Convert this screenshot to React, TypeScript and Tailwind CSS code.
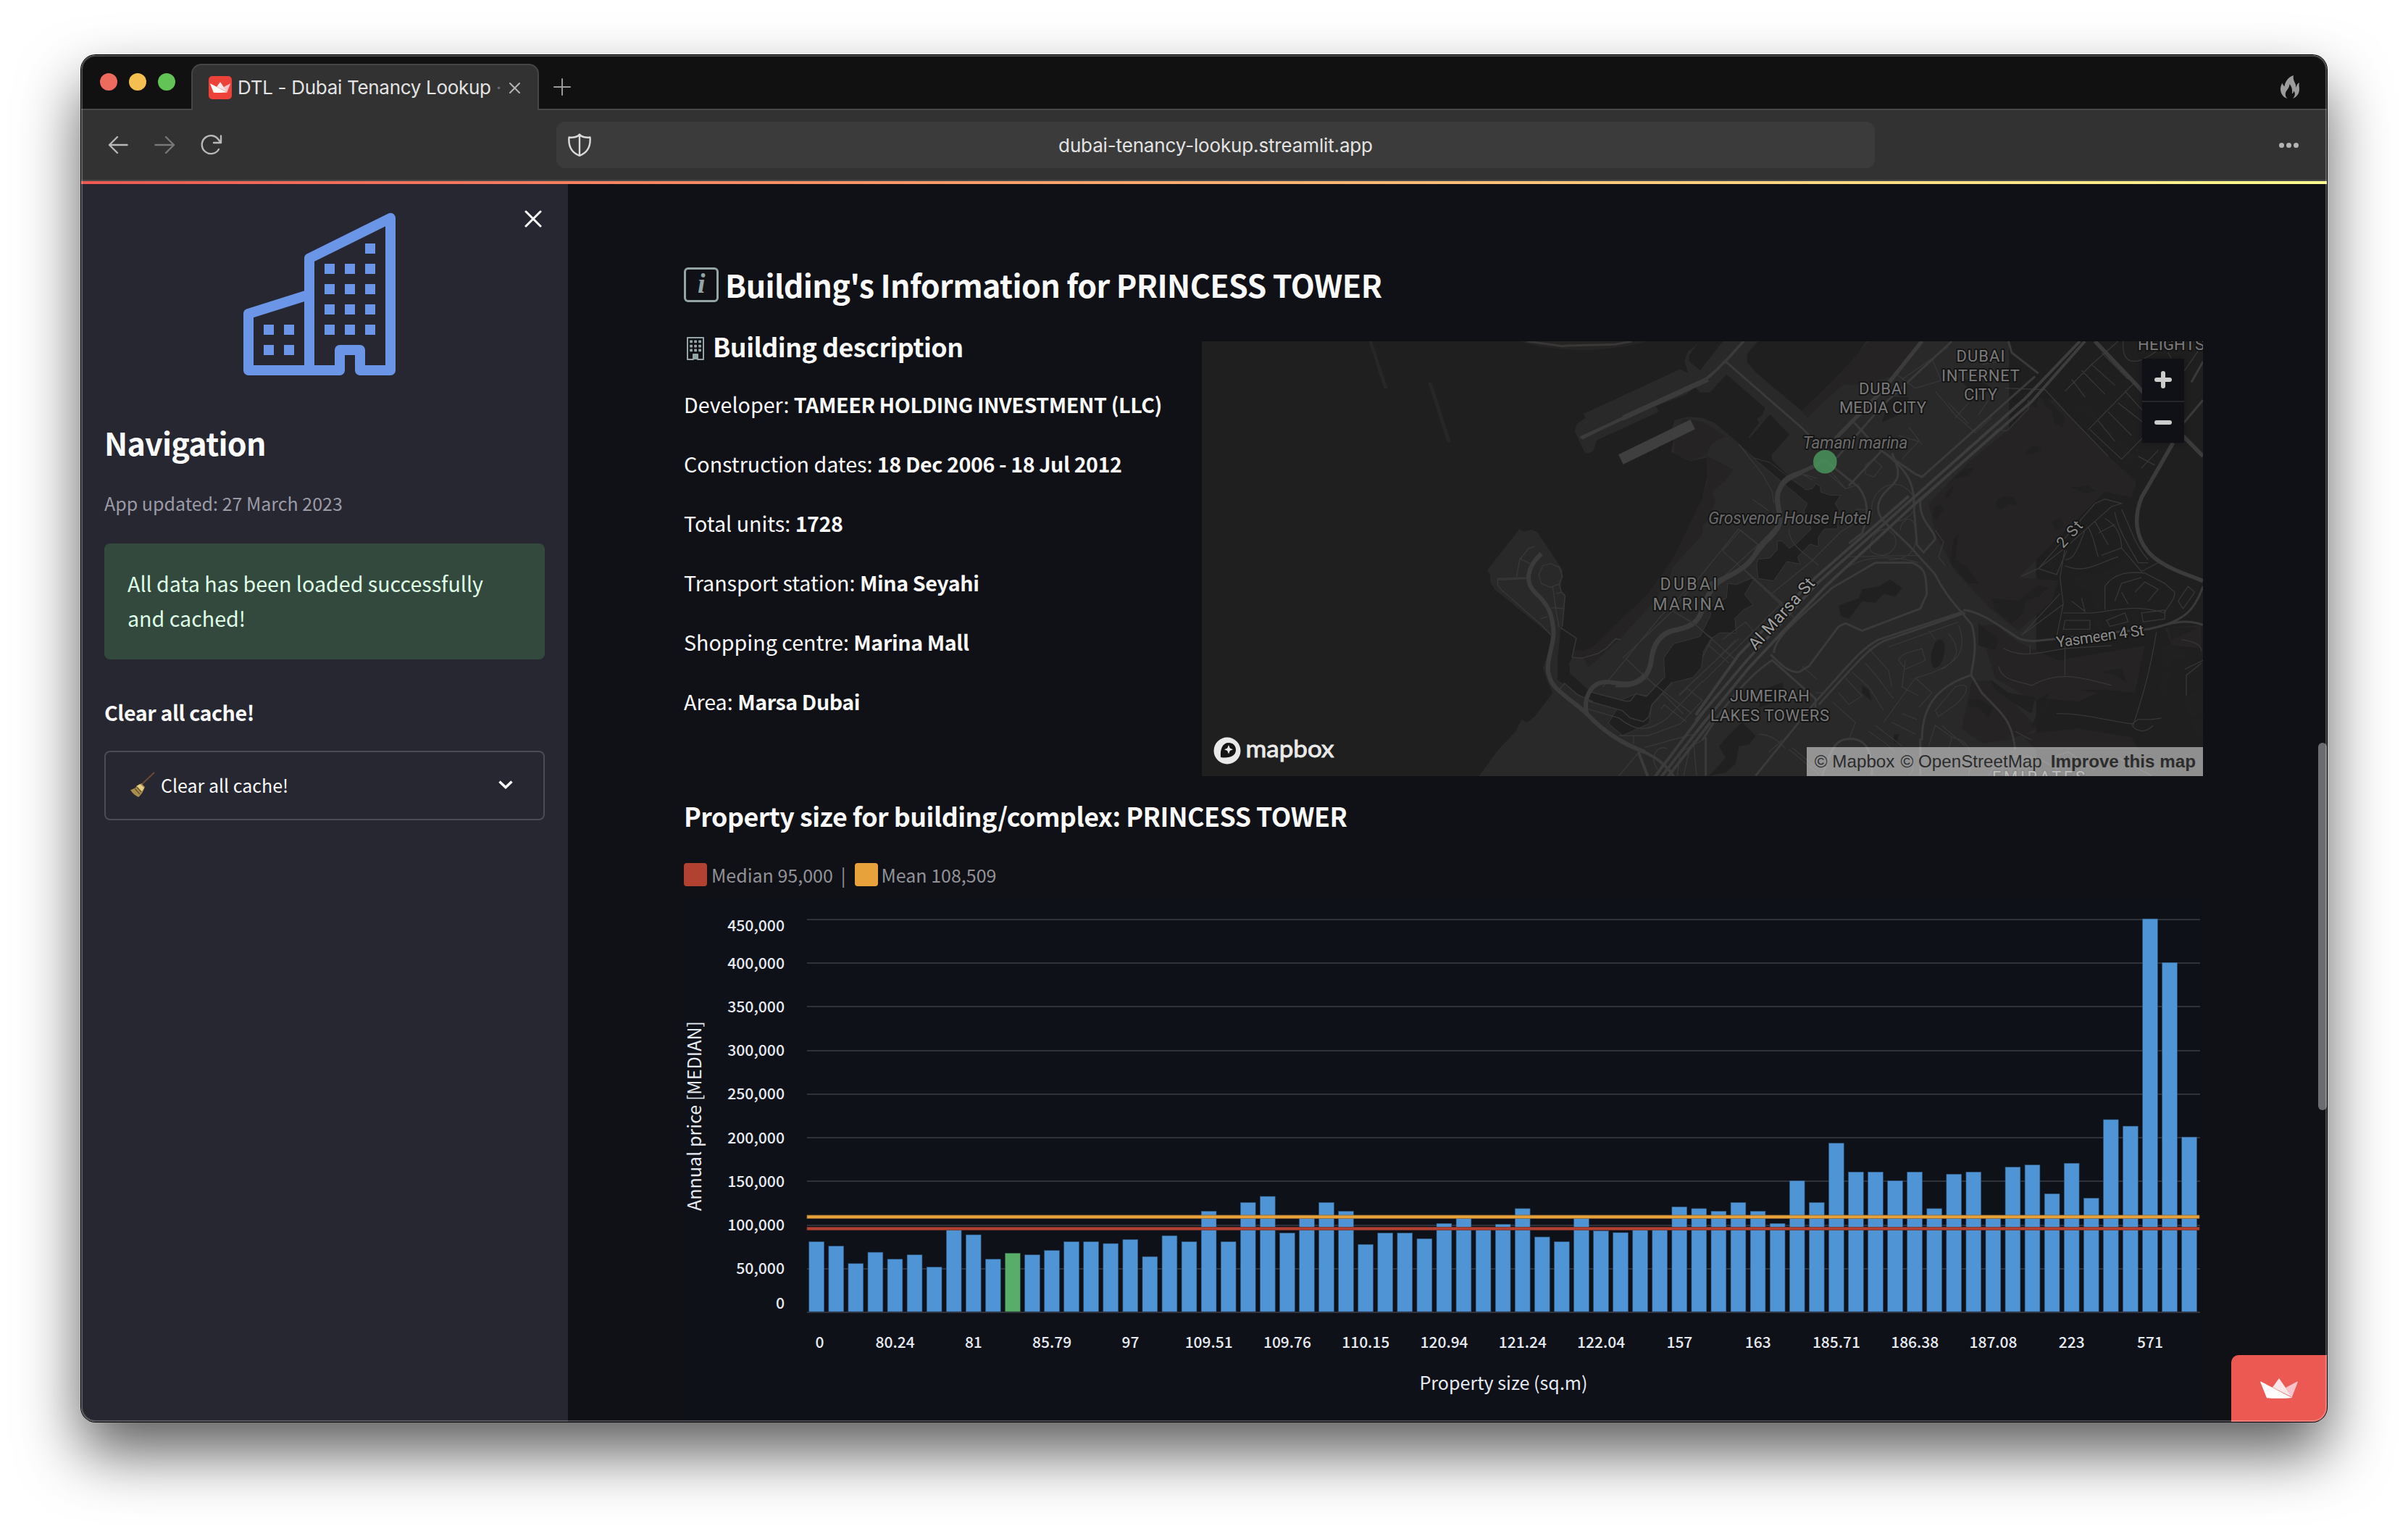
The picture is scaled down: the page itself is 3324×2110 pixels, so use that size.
import React from "react";

const SANS = "font-['Noto_Sans_CJK_SC','Noto_Sans',sans-serif]";

function Crown({ className }: { className: string }) {
  return (
    <svg className={className} viewBox="0 0 52 28">
      <path d="M26 0 L44 26 L17 12.5 Z" fill="#fde6ea" />
      <path d="M51 4.5 Q52 4 51.7 5.5 L43.5 27 L35 13 Z" fill="#f9c3cb" />
      <path d="M0.3 5.5 Q0 4 1.5 4.8 L44 27 Q26 28.6 9 27.2 Z" fill="#fffdfc" />
    </svg>
  );
}

function TabBar() {
  return (
    <div className="flex h-[76px] shrink-0 items-end bg-[#111111]">
      <div className="flex h-full flex-1 items-end">
        <div className="flex h-full w-[152px] items-center gap-4 border-b-2 border-[#484646] pl-[26px]">
          <span className="size-6 rounded-full bg-[#ec6a5e]" />
          <span className="size-6 rounded-full bg-[#f4bf50]" />
          <span className="size-6 rounded-full bg-[#61c454]" />
        </div>
        <div className="flex h-16 w-[480px] items-center rounded-t-[14px] border-x-2 border-t-2 border-[#454545] bg-[#323232] pl-[22px]">
          <span className="flex size-8 items-center justify-center rounded-[5px] bg-[#ee4238]">
            <Crown className="w-7" />
          </span>
          <span className="ml-2 w-[375px] overflow-hidden whitespace-nowrap font-[Inter,sans-serif] text-[26px] leading-8 tracking-[-0.3px] text-[#e3e3e3]">
            DTL - Dubai Tenancy Lookup <span className="text-[#6a6a6a]">·</span>
          </span>
          <svg className="w-[15px]" viewBox="0 0 15 15" stroke="#b4b4b4" strokeWidth="2" strokeLinecap="round">
            <path d="M1 1L14 14M14 1L1 14" />
          </svg>
        </div>
        <div className="flex h-full flex-1 items-center border-b-2 border-[#484646] pl-5">
          <svg className="mt-[14px] w-6" viewBox="0 0 24 24" stroke="#9a9a9a" strokeWidth="2" strokeLinecap="round">
            <path d="M12 1V23M1 12H23" />
          </svg>
          <svg className="mt-[14px] mr-[38px] ml-auto h-8 w-[26px]" viewBox="0 0 26 32" fill="#9c9c9c">
            <path d="M18 0C17 5 19 8 20.5 11.500C21 13 21.300 15 21.300 17C22.300 15 22.500 11.500 26 10C25 13 26 16 26 19C26 25 22.500 30 17 32C20.500 28 20.500 25 18.500 21.500C18 23 17.500 24.500 16 25.500C16.500 21 16 16 12.500 12C12.500 17 8.500 20 7 24C6.300 27 7 30 9.500 32C3 30 0 24.500 0 19C0 16 1 13 2.500 10.500C3 12.500 4 14 5.500 15.500C6 9 11 2 18 0Z" />
          </svg>
        </div>
      </div>
    </div>
  );
}

function Toolbar() {
  return (
    <div className="flex h-[98px] shrink-0 items-center border-b-2 border-[#484848] bg-[#323232] pl-[37px] pr-[39px]">
      <svg className="w-7" viewBox="0 0 28 26" fill="none" stroke="#b8b8b8" strokeWidth="2.4" strokeLinecap="round" strokeLinejoin="round">
        <path d="M13 2L2 13L13 24M2 13H26.500" />
      </svg>
      <svg className="ml-9 w-7" viewBox="0 0 28 26" fill="none" stroke="#787878" strokeWidth="2.400" strokeLinecap="round" strokeLinejoin="round">
        <path d="M16 2L27 13L16 24M27 13H1.500" />
      </svg>
      <svg className="ml-9 w-[30px]" viewBox="0 0 30 30" fill="none" stroke="#b8b8b8" strokeWidth="2.400" strokeLinecap="round" strokeLinejoin="round">
        <path d="M25 21A12.500 12.500 0 1 1 24.500 7.500L27.500 11.500M28 2.500V12H18" />
      </svg>
      <div className="ml-[461px] flex h-16 w-[1820px] items-center rounded-xl bg-[#3b3b3b] pl-4">
        <svg className="w-8" viewBox="0 0 32 32" fill="none" stroke="#dadada" strokeWidth="2.400" strokeLinejoin="round">
          <path d="M16 1.500C18 4.500 24 6.500 30.500 5.500C31.500 17 28.500 26 16 30.800C3.500 26 0.500 17 1.500 5.500C8 6.500 14 4.500 16 1.500ZM16 1.500V30.800" />
        </svg>
        <span className="flex-1 pt-px pr-[48px] text-center font-[Inter,sans-serif] text-[26px] leading-8 tracking-[-0.15px] text-[#e3e3e3]">
          dubai-tenancy-lookup.streamlit.app
        </span>
      </div>
      <div className="ml-auto flex gap-[3px]">
        <span className="size-[7px] rounded-full bg-[#b4b4b4]" />
        <span className="size-[7px] rounded-full bg-[#b4b4b4]" />
        <span className="size-[7px] rounded-full bg-[#b4b4b4]" />
      </div>
    </div>
  );
}

const windowCells: [number, number][] = [
  [168, 42],
  ...[70, 98, 126, 154].flatMap((y) => [112, 140, 168].map((x) => [x, y] as [number, number])),
  [28, 154], [56, 154], [28, 182], [56, 182],
];

function Sidebar() {
  return (
    <aside className="w-[672px] shrink-0 bg-[#262730] px-8">
      <div className="flex items-start pt-10 pl-[192px]">
        <svg className="h-[224px] w-[210px]" viewBox="0 0 210 224" fill="none" stroke="#6b95e6" strokeWidth="14" strokeLinejoin="round">
          <path d="M91 217V62.500L203 7V217H161V189H133V217H7V139L91 112.500" />
          {windowCells.map(([x, y]) => (
            <rect key={x + "-" + y} x={x} y={y} width="14" height="14" fill="#6b95e6" stroke="none" />
          ))}
        </svg>
        <svg className="mt-[-4px] mr-[4px] ml-auto w-6" viewBox="0 0 24 24" stroke="#fafafa" strokeWidth="3" strokeLinecap="round">
          <path d="M2 2L22 22M22 2L2 22" />
        </svg>
      </div>
      <h2 className="mt-[62px] text-[43px] leading-[60px] font-bold tracking-[-0.018em] text-[#fafafa]">Navigation</h2>
      <p className="mt-[34px] text-[25px] leading-10 text-[#9b9ba7]">App updated: 27 March 2023</p>
      <div className="mt-[36px] rounded-lg bg-[#33493d] px-8 pt-[31px] pb-[33px] text-[28.650px] leading-[48px] text-[#dfffe6]">
        All data has been loaded successfully
        <br />
        and cached!
      </div>
      <h3 className="mt-[53px] text-[28.650px] leading-10 font-bold tracking-[-0.015em] text-[#fafafa]">Clear all cache!</h3>
      <button className="mt-[33px] flex h-24 w-full items-center rounded-lg border-2 border-[#4b4c54] pr-[42px] pb-[2px] pl-[34px]">
        <svg className="h-9 w-[34px]" viewBox="0 0 34 36">
          <path d="M15 18L33 1" stroke="#6d4a35" strokeWidth="2" />
          <path d="M15 16L20 21C18 26 16 31 11 35C7 33 3 30 0 25C6 24 10 19 15 16Z" fill="#a88f4e" />
          <path d="M13 17L19 22L16 27L8 20Z" fill="#e6cf83" />
          <path d="M6 23L13 31M9 21L15 28" stroke="#6b5733" strokeWidth="1.500" />
        </svg>
        <span className="ml-2 text-[25px] leading-10 text-[#fafafa]">Clear all cache!</span>
        <svg className="ml-auto w-5" viewBox="0 0 20 12" fill="none" stroke="#fafafa" strokeWidth="3.500">
          <path d="M1.500 1.500L10 9.500L18.500 1.500" />
        </svg>
      </button>
    </aside>
  );
}

const roadsWest = {
  wide: "M1070 770C1030 810 1015 860 1050 900C1090 940 1105 970 1108 1040C1105 1090 1080 1150 1095 1185C1105 1230 1160 1260 1210 1310C1270 1380 1330 1415 1390 1440",
  thin: "M1002 785L1035 803M1050 745L1030 752L1003 790L993 848M935 853L1028 850M935 858L1025 854M935 853V875L945 890L1070 1010L1100 1045M1075 810L1098 803L1125 815L1135 845L1125 872L1098 883L1070 870L1062 840ZM1125 872L1132 900L1143 912L1135 1015M1105 880L1115 960L1125 1018M1100 952L1138 955M1115 905L1132 900M1067 990L1090 982M1130 1020L1178 1055L1165 1120L1195 1123L1245 1107L1272 1088L1300 1057L1315 1060M1125 1230L1142 1208L1180 1245L1230 1270M1222 1237L1330 1268L1345 1268L1362 1243L1395 1252L1448 1190M1215 1268L1320 1300L1345 1325L1385 1337L1402 1322L1412 1280L1475 1203M1260 1220L1332 1125L1380 1060L1440 980L1520 890M1332 1125L1395 1190L1535 1310M1215 1295L1310 1325C1360 1370 1400 1375 1460 1325L1568 1200M1310 1385L1400 1385L1500 1345L1568 1265M1355 1385V1412M1310 1520L1380 1430M1495 1250L1520 1225L1568 1265M1440 1295L1450 1280L1520 1340M1390 1425L1470 1400L1540 1380M1490 1520L1500 1440L1568 1400M1510 1520L1530 1420L1568 1380M1550 1520L1540 1400M1430 1500C1400 1460 1430 1410 1460 1430",
};

const parks = [
  "M1000 240L1060 250L1110 310L1220 440L1270 490L1305 530L1290 580L1210 560L1130 650L950 850L1070 860L1050 930L950 1030L870 960L760 830L700 700L680 600L800 460L910 360Z",
  "M830 1010L880 1010L950 1070L1070 1130L1330 1080L1300 1240L1200 1230L1060 1230L1000 1270L880 1190Z",
  "M810 1200L870 1200L1010 1360L920 1400L840 1410L780 1360Z",
  "M960 1380L1130 1360L1290 1390L1310 1430L1000 1430Z",
  "M1060 1220L1190 1240L1130 1270L1030 1260Z",
  "M1390 1020L1500 1010V1090L1410 1080Z",
];

const ponds = [
  "M1110 845L1200 835L1280 780L1290 805L1220 870L1210 905L1195 960H1180L1165 900L1130 885Z",
  "M410 945L470 920L480 890L530 880L565 857L600 885L580 915L545 905L520 935L480 930L440 990L415 980Z",
  "M700 1070C715 1050 730 1060 728 1090C728 1120 715 1160 695 1155C680 1130 690 1090 700 1070Z",
  "M885 590C900 570 945 570 945 600C930 615 925 585 900 620C885 620 880 605 885 590Z",
  "M970 430L995 405L1020 410L1010 425L985 435Z",
  "M755 515L790 480L815 480L800 505Z",
  "M700 610L715 600L725 620L705 655L692 640Z",
  "M735 560L755 540L745 575L730 580Z",
  "M770 700L760 790L800 820L830 870L800 870L745 800L755 720Z",
  "M870 920L950 930L1010 875L1040 885L1010 915L970 930L965 970L930 1005L880 960Z",
  "M1110 545L1160 540L1185 560L1150 565Z",
  "M1050 660L1080 650L1085 680L1060 690Z",
  "M1150 257L1170 275L1200 330L1270 400L1305 445L1290 475L1270 450L1240 380L1190 340L1160 300L1120 290Z",
  "M1020 240L1040 250L1090 310L1085 340L1060 330L1050 285L1030 270Z",
  "M990 245L1010 240L1005 275L990 270Z",
  "M830 1005L890 1060L880 1095L830 1080Z",
  "M865 1195L920 1240L1000 1255L990 1310L930 1270L880 1230Z",
  "M1200 1170L1260 1155L1275 1205L1240 1180Z",
  "M1015 1290L1040 1260L1040 1290L1010 1330L1020 1360L990 1350Z",
  "M800 1265L830 1260L875 1290L860 1325L830 1290L800 1285Z",
  "M1400 1020L1490 1020L1440 1045L1410 1060Z",
  "M1380 1080L1430 1080L1470 1120L1410 1120L1405 1150H1380Z",
  "M1380 1180L1410 1160L1390 1250L1372 1240Z",
  "M1440 1260L1470 1240L1505 1230V1310L1470 1320Z",
  "M1470 1340L1505 1320V1400L1480 1380Z",
  "M50 1420L90 1370L120 1340L160 1385L140 1415L110 1420L100 1480L70 1510L20 1520L70 1460Z",
  "M180 1230L240 1205L250 1260L170 1290Z",
  "M480 1215L500 1230L510 1270L480 1240Z",
  "M575 1380L590 1380L585 1410H575Z",
  "M1185 985L1200 990V1030L1180 1020Z",
  "M1295 960L1308 960V1000L1290 990Z",
  "M1030 800L1080 760L1060 815L1025 825Z",
  "M1400 940L1420 950L1410 985L1395 975Z",
  "M770 180L840 185L870 210L840 235L810 220Z",
  "M560 240L620 240L610 290L540 325Z",
];

const roadsEast = {
  major:
    "M-20 1335L130 1135L345 870L630 585L970 245L1135 51M-20 1375L140 1155L370 880L640 600L990 255L1150 51M-20 1315L110 1110L340 850L620 575",
  wide: "M660 51L540 220L400 380M235 640C215 560 235 520 270 505C310 490 320 480 370 455M235 640C235 700 170 720 155 780C110 840 60 850 0 885M1180 51L1310 205L1400 320L1505 440M1415 395L1320 580C1285 680 1320 760 1380 800C1420 830 1460 840 1505 862",
  medium:
    "M125 51L70 120L0 188M70 120L300 345L330 380M455 325L530 415L640 500L660 510L1000 170M370 455L470 545C500 590 500 640 480 700L440 735M540 420L440 540M400 450L540 270L750 51M530 415C600 470 640 520 635 600L645 740L665 765L700 720C700 690 650 660 655 590L890 350M570 430C600 500 590 520 560 550C510 600 530 640 545 660L620 740L700 840C730 910 760 940 810 1010C830 1090 810 1150 808 1180L840 1240C900 1310 930 1330 940 1430M215 1105C215 1050 300 980 390 885L520 800H630C680 820 670 860 675 905L655 955L480 1030L430 1005L410 1015L320 1150L290 1170C260 1170 240 1150 205 1110M0 1400C90 1230 180 1150 210 1130L340 1260L340 1290M10 1520V1390M785 965L530 1060C480 1090 460 1120 340 1270L160 1520M790 970L545 1065C500 1090 470 1130 350 1280M785 960C840 965 900 1020 950 1055C990 1080 1060 1050 1340 1025C1400 1010 1440 985 1505 1010M1340 1025C1450 1000 1480 960 1505 880M660 1400C660 1290 700 1220 808 1180M360 1520C390 1420 400 1395 450 1395C500 1400 510 1450 510 1520M655 1395V1520M920 51L930 90L1010 160M1505 250L1415 370M1470 190L1505 120",
  thin: "M470 535L430 550L380 500M490 470L515 450L540 475L515 510L490 500ZM510 640C500 560 560 520 600 540C660 580 650 640 590 660M505 745C510 700 540 680 560 690C600 720 580 770 540 775C510 770 500 760 505 745M595 690C600 640 640 640 640 690C650 760 620 790 560 790M420 830C470 780 560 770 650 800M440 780L650 775M110 400L180 500L210 560L215 600M150 585L200 625L170 600M260 685C260 740 300 760 350 810M60 760L115 690L170 740M60 760L140 840L260 960M130 830L280 990M330 520L300 500L345 515M385 490L430 550M460 620H490M410 700L480 650M600 180L690 110L740 70M690 110L720 190M700 220L760 300L820 360L870 310M760 310L800 260M580 160L640 210L730 180M840 130L890 120M740 260L800 330M860 250L830 300M590 370L650 390L600 450M620 340L660 400M1090 220L1170 130L1250 51M1110 180L1150 240M1140 150L1210 230M1170 130L1240 200M1200 90L1280 180M1160 350L1300 190M1165 350L1260 450L1330 370M1190 320L1240 390M1220 290L1290 370M1250 260L1330 330M1270 220L1360 330M1320 480L1370 420M1310 440L1360 470M1265 51C1260 130 1300 140 1370 80M1400 90L1420 130L1450 150L1505 60M910 210L1030 215L1100 300L1220 440M890 350L915 355L980 280V250M960 845L1010 820L1180 600L1210 585L1260 600L1230 610L1090 750L1010 820L1065 840L1095 760M1090 750L1075 850L1085 940L1065 1050M1085 940L960 1045L1075 905M1150 690C1120 780 1110 790 1090 790M1090 810C1150 840 1190 800 1250 780M1160 680C1180 720 1180 750 1190 780M1180 660L1220 740M1190 700L1240 670M1210 650C1240 670 1260 700 1260 750L1320 830L1370 800M1240 630C1250 690 1280 740 1310 800L1340 800M1260 620C1290 690 1300 740 1340 790M1260 750L1200 775M1085 970L1170 970C1250 960 1300 940 1390 970M1210 960V880C1240 830 1290 830 1330 835L1390 870L1420 900C1420 930 1400 940 1390 970M1240 930L1260 870L1320 850M1300 900L1330 865L1370 890L1340 930M1280 940L1260 900M1110 930L1150 965L1140 920M1090 995H1165V1025H1085ZM1215 995L1270 970L1280 1000L1225 1015ZM1320 970L1390 960V990L1325 1000ZM1430 930L1460 880L1480 900L1445 955ZM500 1090L560 1165L570 1220M560 1085L770 1000M590 1130C600 1100 640 1100 660 1090L670 1130L610 1160ZM680 1030L700 1060M740 1040C770 1080 780 1120 720 1160M770 1010C800 1100 770 1150 640 1190L545 1340M610 1130L600 1220L650 1250M450 1170L500 1220L545 1300M490 1140C540 1200 550 1230 575 1260M430 1190L480 1250L440 1280L410 1240M390 1270L460 1340L440 1400M640 1190L690 1240L650 1290M700 1300L760 1220C800 1200 810 1230 760 1280L710 1320ZM570 1340L640 1380M600 1310L645 1330M500 1370L550 1410L580 1440M520 1350L600 1420M680 1420L700 1350L750 1390L740 1430M720 1350L790 1420M890 1150C900 1200 950 1200 990 1215C1060 1170 1120 1180 1230 1215M905 1090C960 1120 990 1110 1090 1090L1230 1080M1090 1050L1090 1180M985 1080V1110M1065 1310C1150 1310 1200 1330 1290 1345L1310 1330H1350L1380 1325M1290 1345C1300 1370 1330 1380 1355 1350M1295 1350C1320 1260 1340 1200 1365 1035M1440 1060C1500 1070 1500 1090 1500 1100M1455 1250V1180L1500 1140M1450 1160L1505 1130M10 1040L30 1055L0 1120M40 1130L100 1060M20 1080L80 1140M60 1060L130 1000L160 1040M170 1380C200 1380 230 1400 250 1430M260 1430L350 1515M270 1425L360 1510M240 1400L200 1440M340 1240H370M345 1195L300 1150M750 1390C800 1400 820 1440 800 1520M600 1430C640 1470 640 1500 620 1520M860 1520C900 1440 980 1440 1040 1480L1100 1520M940 1370L990 1400M1050 1460L1100 1440L1180 1500M1250 1460L1350 1520M700 690L725 730L710 780L730 810",
};

function MapLabel({ x, y, w, children, size = 22, italic = false, fill = "#7a7a7a" }: {
  x: number; y: number; w: number; children: string; size?: number; italic?: boolean; fill?: string;
}) {
  return (
    <text
      x={x - w / 2} y={y} textLength={w} fontSize={size} fill={fill} fontStyle={italic ? "italic" : "normal"}
      fontFamily="Roboto, sans-serif" stroke="#151515" strokeWidth="4" paintOrder="stroke" strokeLinejoin="round"
    >
      {children}
    </text>
  );
}

function MapPanel() {
  return (
    <div className="relative mt-[18px] h-[600px] w-[1382px] shrink-0 overflow-hidden bg-[#1f1f1f]">
      <svg className="block" width="1382" height="600" viewBox="0 0 1382 600" fill="none">
        <g className="[&_path]:[vector-effect:non-scaling-stroke]">
          <g transform="translate(-9 -21) scale(.44643 .40816)">
            <path d="M536 51H547L595 210L584 213ZM720 192L731 190L790 390L779 394Z" fill="#272727" />
            <path d="M1000 51C1060 70 1110 80 1200 81C1290 80 1350 65 1400 51Z" fill="#272424" />
            <path d="M1025 51L1135 68L1150 66L1300 62L1350 51" stroke="#383838" strokeWidth="3" />
            <path d="M1200 297L1498 146L1568 180L1520 230L1425 270L1433 290L1243 385L1230 422L1218 430H1205L1173 355L1180 330L1207 310Z" fill="#292929" />
            <path d="M1190 377L1375 283L1600 165M1195 381L1260 345L1600 175" stroke="#3b3b3b" strokeWidth="3" />
            <path d="M875 1525L905 1480L935 1435L990 1370L1010 1330L1025 1340L1050 1320L1105 1240L1088 1200L1075 1155L1095 1090L1100 1045L925 890L912 865V840L902 825L1002 687L1015 695L1040 688L1058 697L1136 825L1130 890L1146 910L1135 1020L1130 1080L1120 1130V1195L1200 1250L1222 1237L1158 1175L1155 1140L1165 1120L1230 1085L1290 1020L1400 905L1480 780L1540 665L1568 580H2600V1525Z" fill="#292929" />
            <path d="M1165 1120L1170 1095L1195 1097L1230 1085L1290 1020L1400 905L1480 780L1540 665L1568 580L1600 650L1548 730L1475 815L1470 840L1420 930L1310 1060L1215 1155L1200 1120Z" fill="#262324" />
          </g>
          <g transform="translate(581 -6) scale(.33333)">
            <path d="M330 665L345 600L355 550L345 500L280 515L200 475L210 430L200 390L215 345L270 330L330 335L380 355L480 440L760 690L900 900H330Z" fill="#292929" />
            <path d="M415 18L320 138L275 100V75L310 30L270 60L255 100L285 190L320 230H360L430 155L590 295L575 325L555 340L565 355L520 415L525 420L610 320L690 405L615 490L620 510L700 590L770 640L900 900H1600V0H1020L960 90L880 170L800 290L740 305L555 150L515 105V70L560 18Z" fill="#292929" />
            <path d="M250 340L330 350L425 410L370 440L345 490L280 512L215 480V400ZM345 490L460 550L420 600L370 640L385 680L350 760L200 935L330 665L350 600Z" fill="#262324" />
            <path d="M740 305L880 170L1020 18H1230L1110 165L960 200L915 195L830 270L765 335Z" fill="#262324" />
            <path d="M610 520L700 590L760 633L785 628L800 607L818 618L820 642L860 655L903 655L880 690L895 715L890 795H835L810 830V868L775 858L725 910L735 940L680 930L625 1010L560 1000L555 940L560 920L610 915L640 880V845H660L690 875L720 855L780 795L750 720L765 690L540 500Z" fill="#1f1f1f" stroke="#363636" strokeWidth="1" />
            <path d="M545 1000L505 1065L540 1110L500 1130L465 1165L470 1225H400L365 1250L335 1300L325 1370L290 1410L210 1430L175 1470L120 1525L110 1600L0 1650L-60 1600L0 1500L50 1480L110 1485L175 1425L170 1330L210 1270L320 1240L365 1150L360 1120L430 1080L435 1020L470 1025L530 1000Z" fill="#1f1f1f" stroke="#363636" strokeWidth="1" />
            <path d="M-18 487L280 342L300 382L2 527Z" fill="#3f3f3f" />
            <path d="M0 330L70 298L340 175C370 165 400 120 430 95L500 18M0 342L355 180" stroke="#3b3b3b" strokeWidth="3.500" />
            <path d="M-30 1440H20C80 1430 110 1400 118 1340C125 1280 150 1230 210 1215C300 1200 320 1170 335 1110C360 1050 380 1020 430 995C560 930 530 900 610 830C680 760 640 740 640 660C650 600 690 580 740 560" stroke="#3b3b3b" strokeWidth="7" />
            <path d="M0 1330L200 1140L480 795L560 860L410 1000M200 1130L300 1190L470 1340M235 1480L480 1250M80 1390L250 1560M500 960L660 1100L330 1430M620 1060L780 930L900 810" stroke="#373737" strokeWidth="1.500" />
          </g>
          <g transform="translate(-9 -21) scale(.44643 .40816)">
            <path d="M1130 1025L1178 1055L1165 1120L1155 1140L1158 1175L1222 1237L1330 1268H1345L1362 1243L1395 1252L1448 1190L1500 1180L1475 1203L1412 1280L1402 1322L1385 1337L1345 1325L1320 1300L1215 1268L1120 1195V1130Z" fill="#1f1f1f" />
            <path d={roadsWest.thin} stroke="#373737" strokeWidth="1.500" />
            <path d={roadsWest.wide} stroke="#3b3b3b" strokeWidth="6" />
            <path d="M1210 1310C1200 1260 1220 1205 1270 1203C1340 1210 1350 1220 1390 1180" stroke="#3b3b3b" strokeWidth="6" />
            <path d="M1330 1415C1400 1440 1450 1470 1480 1525M1370 1440L1400 1525M1420 1525L1568 1310M1440 1525L1580 1330M1460 1525L1600 1330" stroke="#3b3b3b" strokeWidth="4" />
          </g>
          <g transform="translate(691 -21) scale(.45918 .40816)">
            {parks.map((d) => <path key={d} d={d} fill="#262324" />)}
            {ponds.map((d) => <path key={d} d={d} fill="#202020" />)}
            <path d={roadsEast.thin} stroke="#373737" strokeWidth="1.300" />
            <path d={roadsEast.medium} stroke="#3a3a3a" strokeWidth="3" />
            <path d={roadsEast.wide} stroke="#3b3b3b" strokeWidth="5.500" />
            <path d={roadsEast.major} stroke="#3d3d3d" strokeWidth="4" />
          </g>
        </g>
        <MapLabel x={940} y={73} w={66}>DUBAI</MapLabel>
        <MapLabel x={940} y={99} w={120}>MEDIA CITY</MapLabel>
        <MapLabel x={1075} y={28} w={67}>DUBAI</MapLabel>
        <MapLabel x={1075} y={55} w={108}>INTERNET</MapLabel>
        <MapLabel x={1075} y={81} w={46}>CITY</MapLabel>
        <MapLabel x={1338} y={12} w={92}>HEIGHTS</MapLabel>
        <MapLabel x={672} y={343} w={79} size={23}>DUBAI</MapLabel>
        <MapLabel x={672} y={371} w={99} size={23}>MARINA</MapLabel>
        <MapLabel x={784} y={497} w={110}>JUMEIRAH</MapLabel>
        <MapLabel x={784} y={524} w={164}>LAKES TOWERS</MapLabel>
        <MapLabel x={1155} y={609} w={128}>EMIRATES</MapLabel>
        <MapLabel x={902} y={148} w={145} size={23} italic fill="#6a6a6a">Tamani marina</MapLabel>
        <MapLabel x={811} y={252} w={224} size={23} italic fill="#6a6a6a">Grosvenor House Hotel</MapLabel>
        <g transform="translate(806 381) rotate(-48)"><MapLabel x={0} y={0} w={124} size={23} fill="#a0a0a0">Al Marsa St</MapLabel></g>
        <g transform="translate(1203 271) rotate(-48)"><MapLabel x={0} y={0} w={42} size={21} fill="#8c8c8c">2 St</MapLabel></g>
        <g transform="translate(1241 414) rotate(-8)"><MapLabel x={0} y={0} w={122} size={21} fill="#8c8c8c">Yasmeen 4 St</MapLabel></g>
        <circle cx="860.300" cy="166.300" r="16.300" fill="#4b9a5e" fillOpacity=".8" />
        <circle cx="35" cy="565" r="18.500" fill="#e9e9e9" />
        <path d="M26 574C25 562 29 554 37 554C43 554 47 558 47 564C47 572 38 576 26 574Z" fill="#151515" />
        <path d="M37 557L38.800 561.500L43 563.300L38.800 565.100L37 569.500L35.200 565.100L31 563.300L35.200 561.500Z" fill="#e9e9e9" />
        <text x="60.500" y="574" textLength="122" fontFamily="Lato, sans-serif" fontWeight="400" fontSize="33" fill="#e9e9e9" stroke="#e9e9e9" strokeWidth=".9" lengthAdjust="spacingAndGlyphs">mapbox</text>
      </svg>
      <div className="absolute top-6 right-[26px] flex w-[58px] flex-col bg-[#101116] shadow-[0_0_8px_rgba(0,0,0,.3)]">
        <span className="flex h-[58px] items-center justify-center">
          <svg className="w-6" viewBox="0 0 24 24" stroke="#cccccc" strokeWidth="6" strokeLinecap="round"><path d="M12 3V21M3 12H21" /></svg>
        </span>
        <span className="flex h-[58px] items-center justify-center border-t-2 border-[#26272b]">
          <svg className="w-6" viewBox="0 0 24 24" stroke="#cccccc" strokeWidth="6" strokeLinecap="round"><path d="M3 12H21" /></svg>
        </span>
      </div>
      <div className="absolute right-0 bottom-0 flex h-10 w-[547px] items-center justify-end bg-white/50 pr-[10px] font-['Liberation_Sans',sans-serif] text-[24.200px] whitespace-nowrap text-[#2c2c2c]">
        <span>© Mapbox</span>
        <span className="ml-2">© OpenStreetMap</span>
        <span className="ml-3 font-bold">Improve this map</span>
      </div>
    </div>
  );
}

const facts: [string, string][] = [
  ["Developer", "TAMEER HOLDING INVESTMENT (LLC)"],
  ["Construction dates", "18 Dec 2006 - 18 Jul 2012"],
  ["Total units", "1728"],
  ["Transport station", "Mina Seyahi"],
  ["Shopping centre", "Marina Mall"],
  ["Area", "Marsa Dubai"],
];

const prices = [
  80, 75, 55, 68, 60, 65, 51, 94, 88, 60, 67, 65, 70, 80, 80, 78, 82.5, 63, 87, 80, 115, 80, 125, 132, 90, 109.5, 125, 115,
  77, 90, 90, 83.5, 101, 109, 95, 100, 118, 85.5, 80, 108, 92.5, 90.5, 94, 94, 120, 118, 115, 125, 115, 101, 150, 125, 193,
  160, 160, 150, 160, 118, 157.5, 160, 110, 165.5, 168, 135, 170, 130, 220, 212.5, 450, 400, 200,
];
const sizes = [
  "0", "80.24", "81", "85.79", "97", "109.51", "109.76", "110.15", "120.94", "121.24", "122.04", "157", "163", "185.71",
  "186.38", "187.08", "223", "571",
];
const BASE = 1810;
const PITCH = 27.07;
const yOf = (v: number) => BASE - v * 1.2044;

function Chart() {
  const ticks = [0, 50, 100, 150, 200, 250, 300, 350, 400, 450];
  const labelY: Record<number, number> = { 0: 1806, 450: 1284.500 };
  return (
    <svg className="mt-[13px] block bg-[#0e1117]" width="2093" height="722" viewBox="944 1240 2093 722" fontFamily="'Noto Sans CJK SC', sans-serif" fontWeight="500" fill="#e6eaf1">
      {ticks.map((t) => (
        <rect key={t} x="1114" y={Math.round(yOf(t))} width="1923" height="2" fill="#2f323b" />
      ))}
      {ticks.map((t) => (
        <text key={t} x="1083" y={labelY[t] ?? yOf(t) + 8.500} fontSize="21.200" textAnchor="end">
          {t ? t + ",000" : "0"}
        </text>
      ))}
      {prices.map((p, i) => (
        <rect
          key={i} x={1116.800 + i * PITCH} y={yOf(p)} width="20.800" height={BASE - yOf(p)}
          fill={i === 10 ? "#58ad69" : "#4f95d5"} stroke={i === 10 ? "#2c5a3e" : "#2c5278"} strokeWidth=".6"
        />
      ))}
      <rect x="1114" y="1677" width="1922" height="4.500" fill="#e8a23c" stroke="#8e672e" strokeWidth=".8" />
      <rect x="1114" y="1693.500" width="1922" height="4" fill="#b34132" stroke="#7c3328" strokeWidth=".8" />
      {sizes.map((s, i) => (
        <text key={s} x={i ? 1127.300 + i * 4 * PITCH : 1131.500} y="1860" fontSize="21" textAnchor="middle">{s}</text>
      ))}
      <text x="2075.500" y="1918" fontSize="25.100" fontWeight="400" textAnchor="middle">Property size (sq.m)</text>
      <text transform="translate(967.500 1540) rotate(-90)" fontSize="25.100" fontWeight="400" textAnchor="middle">Annual price [MEDIAN]</text>
    </svg>
  );
}

function Main() {
  return (
    <main className="relative min-w-0 flex-1 overflow-hidden bg-[#101116] pt-[108px] pl-40 text-[#fafafa]">
      <h2 className="flex h-[60px] items-center text-[43px] leading-[60px] font-bold tracking-[-0.0145em]">
        <span className="mt-[2px] mr-[9px] flex size-12 items-center justify-center rounded-md border-[3px] border-[#95a5a6] pb-1 font-['Liberation_Serif',serif] text-[38px] leading-none font-bold text-[#95a5a6] italic">i</span>
        Building's Information for PRINCESS TOWER
      </h2>
      <div className="mt-[31px] flex">
        <div className="w-[715px] shrink-0">
          <h3 className="flex h-12 items-center text-[35.800px] leading-[48px] font-bold tracking-[-0.0145em]">
            <svg className="mt-2 mr-[12px] ml-1 h-8 w-6" viewBox="0 0 24 32" fill="#95a5a6">
              <path d="M1 1H23V31H15V24H9V31H1Z" fill="none" stroke="#95a5a6" strokeWidth="2" strokeLinejoin="round" />
              <rect x="8" y="24" width="8" height="7" />
              {[4.500, 10.700, 16.500].flatMap((y) => [4.200, 10.200, 16.200].map((x) => <rect key={x + "-" + y} x={x} y={y} width="3.800" height="3.800" rx=".8" />))}
            </svg>
            Building description
          </h3>
          <div className="mt-8 flex flex-col gap-8 text-[28.650px] leading-[50px] whitespace-nowrap">
            {facts.map(([k, v]) => (
              <p key={k}>
                {k}: <strong className="font-bold tracking-[-0.0145em]">{v}</strong>
              </p>
            ))}
          </div>
        </div>
        <MapPanel />
      </div>
      <h3 className="mt-[30px] text-[35.800px] leading-[48px] font-bold tracking-[-0.0145em]">Property size for building/complex: PRINCESS TOWER</h3>
      <div className="mt-[38px] flex h-10 items-center text-[25px] leading-10 text-[#929296]">
        <span className="mr-[6px] size-8 rounded bg-[#b34132]" />
        Median 95,000
        <span className="mr-[12px] ml-[11px]">|</span>
        <span className="mr-[5px] size-8 rounded bg-[#e8a23c]" />
        Mean 108,509
      </div>
      <Chart />
      <div className="absolute top-[771px] right-0 h-[507px] w-3 rounded-full bg-[#6b6c70]" />
      <div className="absolute right-0 bottom-0 flex h-[92px] w-[132px] items-center justify-center rounded-tl-[10px] bg-[#ec5953]">
        <Crown className="w-[52px]" />
      </div>
    </main>
  );
}

export default function App() {
  return (
    <div className={"h-[2110px] w-[3324px] overflow-hidden bg-white pt-[76px] pl-[112px] " + SANS}>
      <div className="relative flex h-[1886px] w-[3100px] flex-col overflow-hidden rounded-[20px] shadow-[0_0_0_1px_#000,0_42px_84px_rgba(0,0,0,.64)]">
        <TabBar />
        <Toolbar />
        <div className="h-1 shrink-0 bg-linear-to-r from-[#ec5953] to-[#fefb8f]" />
        <div className="flex min-h-0 flex-1">
          <Sidebar />
          <Main />
        </div>
        <div className="pointer-events-none absolute inset-0 rounded-[20px] shadow-[inset_0_0_0_2px_rgba(255,255,255,.24)]" />
      </div>
    </div>
  );
}
